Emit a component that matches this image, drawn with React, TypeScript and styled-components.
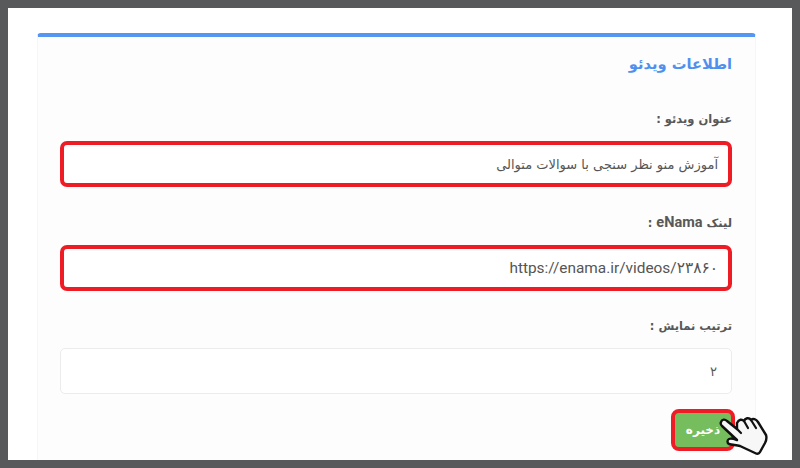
import React from 'react';
import styled, { createGlobalStyle } from 'styled-components';

const GlobalStyle = createGlobalStyle`
  html, body {
    margin: 0;
    padding: 0;
    background: #ffffff;
  }
  * {
    box-sizing: border-box;
  }
`;

const Frame = styled.div`
  width: 800px;
  height: 468px;
  overflow: hidden;
  border: 8px solid #58595b;
  background: #ffffff;
  padding: 25px 36px 0 29px;
  font-family: "DejaVu Sans", "Noto Sans", sans-serif;
`;

const Card = styled.section`
  height: 427px;
  direction: rtl;
  background: #fdfdfd;
  border-top: 4px solid #5596f2;
  border-left: 1px solid #f6f6f6;
  border-right: 1px solid #f6f6f6;
  border-radius: 4px 4px 0 0;
  padding: 13px 23px 0 22px;
`;

const Title = styled.h2`
  margin: 0 0 32px;
  height: 28px;
  font-size: 14.7px;
  line-height: 28px;
  font-weight: 700;
  color: #4f90ee;
`;

const Field = styled.div`
  display: flex;
  flex-direction: column;
  gap: 13px;
  margin-bottom: 26.5px;
`;

const Label = styled.label`
  height: 18px;
  font-size: 11.5px;
  line-height: 18px;
  font-weight: 700;
  color: #585858;
`;

const LabelLatin = styled.span`
  font-family: Roboto, sans-serif;
  font-size: 14.5px;
  font-weight: 700;
`;

const Input = styled.div<{ $marked?: boolean }>`
  height: 46px;
  display: flex;
  align-items: center;
  padding: 0 ${(p) => (p.$marked ? '10px' : '14px')};
  font-size: 13px;
  color: #555555;
  background: #ffffff;
  border-radius: ${(p) => (p.$marked ? '7px' : '5px')};
  border: ${(p) => (p.$marked ? '4px solid #ee1c25' : '1px solid #ececec')};
`;

const Latin = styled.span`
  direction: ltr;
  unicode-bidi: isolate;
  font-family: Roboto, "DejaVu Sans", sans-serif;
  font-size: 15.4px;
`;

const Actions = styled.div`
  display: flex;
  margin-top: -12px;
  direction: ltr;
`;

const SaveWrap = styled.div`
  position: relative;
  margin-left: auto;
  margin-right: -3px;
`;

const SaveButton = styled.button`
  display: block;
  width: 64px;
  height: 42px;
  border: 4px solid #ee1c25;
  border-radius: 8px;
  background: #76bd5e;
  color: #ffffff;
  font-family: "DejaVu Sans", sans-serif;
  font-size: 12px;
  font-weight: 700;
  padding: 0;
`;

const Hand = styled.svg`
  position: absolute;
  left: 44px;
  top: 0;
  width: 56px;
  height: 50px;
`;

export default function App() {
  return (
    <>
      <GlobalStyle />
      <Frame>
        <Card>
          <Title>اطلاعات ویدئو</Title>
          <Field>
            <Label>عنوان ویدئو :</Label>
            <Input $marked>آموزش منو نظر سنجی با سوالات متوالی</Input>
          </Field>
          <Field>
            <Label>
              لینک <LabelLatin>eNama</LabelLatin> :
            </Label>
            <Input $marked>
              <Latin>https://enama.ir/videos/۲۳۸۶۰</Latin>
            </Input>
          </Field>
          <Field>
            <Label>ترتیب نمایش :</Label>
            <Input>۲</Input>
          </Field>
          <Actions>
            <SaveWrap>
              <SaveButton type="button">ذخیره</SaveButton>
              <Hand viewBox="0 0 56 50">
                <path
                  d="M6 13 C7 10 10 10 12 12 L22 20 L22 14 C24 10 27 10 29 12 C30 9 34 8 36 11 C38 9 41 10 43 13 L51 26 C52 29 51 32 50 34 L45 43 C44 45 42 45 40 44 L25 37 C21 36 17 36 14 35 C12 34 12 31 14 30 C16 29 19 30 22 31 L7 17 C6 16 5 15 6 13 Z"
                  fill="#f7f7f7"
                  stroke="#111111"
                  strokeWidth="2.4"
                  strokeLinejoin="round"
                />
                <path d="M22 20 L26 24 M29 12 L33 19 M36 11 L41 19" stroke="#111111" strokeWidth="2.2" fill="none" strokeLinecap="round" />
              </Hand>
            </SaveWrap>
          </Actions>
        </Card>
      </Frame>
    </>
  );
}
